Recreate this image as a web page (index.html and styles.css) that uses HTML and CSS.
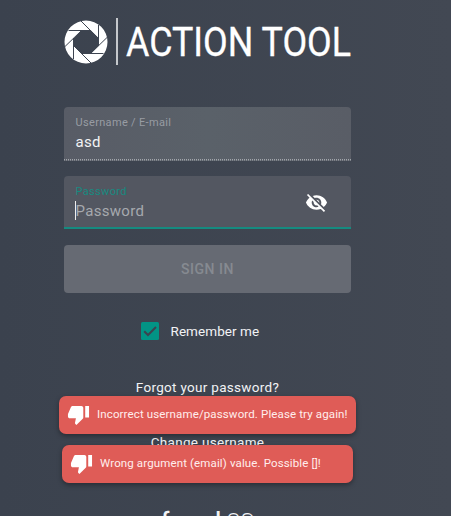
FILE: index.html
```html
<!DOCTYPE html>
<html lang="en">
<head>
<meta charset="utf-8">
<title>Action Tool</title>
<link rel="stylesheet" href="styles.css">
</head>
<body>
<main class="login">
  <header class="brand">
    <svg class="aperture" viewBox="0 0 44 44">
      <path fill="#fff" fill-rule="evenodd" d="M22 .5a21.500 21.500 0 1 0 0 43a21.500 21.500 0 1 0 0-43zM17.500 10.500L27 10.500L34.500 18L34.500 26L27 33.500L17.500 33.500L9.500 25.500L9.500 18.500z"/>
      <path class="blade" d="M17 1L34.500 18.500M4.500 10.500H27M1 26.500L17 11M9.500 18V39M27 43L9.500 25.500M39.500 33.500H17M43 17.500L27 33M34.500 26V5"/>
    </svg>
    <span class="divider"></span>
    <svg class="wordmark" viewBox="0 0 226 34"><text x="0" y="31" textLength="225" lengthAdjust="spacingAndGlyphs">ACTION TOOL</text></svg>
  </header>
  <form class="form">
    <label class="field filled"><span class="label">Username / E-mail</span><span class="value">asd</span></label>
    <label class="field focused">
      <span class="label">Password</span><span class="value placeholder">Password</span>
      <svg class="eye" viewBox="0 0 24 24"><path fill="#fff" d="M12 7c2.760 0 5 2.240 5 5 0 .65-.13 1.260-.36 1.830l2.920 2.920c1.510-1.260 2.700-2.890 3.430-4.750-1.730-4.390-6-7.500-11-7.500-1.400 0-2.740.25-3.980.7l2.160 2.160C10.740 7.130 11.350 7 12 7zM2 4.270l2.280 2.280.46.46C3.080 8.300 1.780 10.020 1 12c1.730 4.390 6 7.500 11 7.500 1.550 0 3.030-.3 4.380-.84l.42.42L19.730 22 21 20.730 3.270 3 2 4.270zM7.530 9.800l1.550 1.550c-.05.21-.08.43-.08.65 0 1.660 1.340 3 3 3 .22 0 .44-.03.65-.08l1.550 1.550c-.67.33-1.410.53-2.200.53-2.760 0-5-2.240-5-5 0-.79.2-1.530.53-2.200zm4.310-.78l3.150 3.150.02-.16c0-1.660-1.340-3-3-3l-.17.01z"/></svg>
    </label>
    <button class="submit" type="button" disabled>SIGN IN</button>
    <label class="remember">
      <svg class="check" viewBox="0 0 18 18"><rect width="18" height="18" rx="1.500" fill="#029485"/><path d="M3.200 9.200L7 13L15 5" fill="none" stroke="#3c434f" stroke-width="2"/></svg>
      <span>Remember me</span>
    </label>
  </form>
  <nav class="links"><a>Forgot your password?</a><a>Change username</a></nav>
  <footer class="product"><b>found</b><span>OS</span></footer>
</main>
<aside class="toasts">
  <div class="toast wide"><svg class="thumb" viewBox="0 0 24 24"><path fill="#fff" d="M15 3H6c-.83 0-1.540.5-1.840 1.220l-3.020 7.050c-.09.23-.14.47-.14.73v2c0 1.100.9 2 2 2h6.310l-.95 4.570-.03.32c0 .41.17.79.44 1.060L9.830 23l6.590-6.590c.36-.36.58-.86.58-1.410V5c0-1.100-.9-2-2-2zm4 0v12h4V3h-4z"/></svg><span>Incorrect username/password. Please try again!</span></div>
  <div class="toast"><svg class="thumb" viewBox="0 0 24 24"><path fill="#fff" d="M15 3H6c-.83 0-1.540.5-1.840 1.220l-3.020 7.050c-.09.23-.14.47-.14.73v2c0 1.100.9 2 2 2h6.310l-.95 4.570-.03.32c0 .41.17.79.44 1.060L9.830 23l6.590-6.590c.36-.36.58-.86.58-1.410V5c0-1.100-.9-2-2-2zm4 0v12h4V3h-4z"/></svg><span>Wrong argument (email) value. Possible []!</span></div>
</aside>
</body>
</html>
```
FILE: styles.css
```css
* { box-sizing: border-box; }
body {
  margin: 0;
  height: 516px;
  overflow: hidden;
  position: relative;
  background: linear-gradient(90deg, #3b424e, #424853);
  font-family: Roboto, sans-serif;
  color: #f2f3f5;
}
.login { width: 287px; margin-left: 64px; padding-top: 18px; }
.brand { display: flex; align-items: center; height: 47px; }
.aperture { width: 44px; height: 44px; margin-left: -.5px; flex: none; }
.blade { fill: none; stroke: #3d4450; stroke-width: 1; }
.divider { width: 2px; height: 47px; margin: 0 8px 0 8.500px; background: #c5c8cc; flex: none; }
.wordmark { width: 226px; height: 34px; flex: none; overflow: visible; }
.wordmark text { font: 400 41px Roboto, sans-serif; fill: #fff; stroke: #fff; stroke-width: .3px; }
.form { margin-top: 42px; }
.field {
  display: flex;
  flex-direction: column;
  position: relative;
  height: 54px;
  padding: 9px 12px 0 11.500px;
  border-radius: 4px 4px 0 0;
}
.filled { background: repeating-linear-gradient(90deg, #a0a4aa 0 1px, transparent 1px 2px) 0 52px / 100% 1.500px no-repeat, linear-gradient(90deg, #585c66, #5a6169 50%, #595d66); }
.focused { margin-top: 15px; height: 53px; background: #535761; border-bottom: 2px solid #158b80; }
.label { font-size: 11px; line-height: 14px; letter-spacing: .33px; color: #989ca3; }
.focused .label { color: #178a80; }
.value { font-size: 15px; line-height: 20px; letter-spacing: .3px; margin-top: 2px; }
.placeholder { color: #a6a9ae; }
.placeholder::before { content: ""; position: absolute; left: 11px; width: 1px; height: 19px; background: #eee; }
.eye { position: absolute; left: 241px; top: 15px; width: 23px; height: 23px; }
.submit {
  display: block;
  width: 100%;
  height: 48px;
  margin-top: 16px;
  border: 0;
  border-radius: 4px;
  background: #666a73;
  color: #868a91;
  font: 500 14px Roboto, sans-serif;
  letter-spacing: .5px;
}
.remember { display: flex; align-items: center; gap: 11.500px; margin: 29px 0 0 77px; height: 18px; font-size: 13.500px; letter-spacing: .07px; }
.check { width: 18px; height: 18px; }
.links { display: flex; flex-direction: column; align-items: center; gap: 39px; margin-top: 39px; font-size: 13.500px; line-height: 16px; letter-spacing: .3px; }
.product { display: flex; justify-content: center; align-items: baseline; gap: 5px; margin-top: 58px; line-height: 28px; }
.product b { font-size: 23px; font-weight: 500; }
.product span { font-size: 22px; font-weight: 300; }
.toasts { position: absolute; top: 396px; left: 59px; width: 297px; display: flex; flex-direction: column; align-items: center; gap: 11px; }
.toast {
  display: flex;
  align-items: center;
  gap: 7px;
  width: 291px;
  height: 38px;
  padding: 0 0 1px 8px;
  border-radius: 7px;
  background: #df5c57;
  box-shadow: 0 2px 5px rgba(0, 0, 0, .35);
  color: #ffeeed;
  font-size: 11.500px;
  letter-spacing: .13px;
  white-space: nowrap;
}
.toast span { padding-bottom: 2px; }
.wide { width: 297px; }
.thumb { width: 23px; height: 23px; flex: none; }
```
